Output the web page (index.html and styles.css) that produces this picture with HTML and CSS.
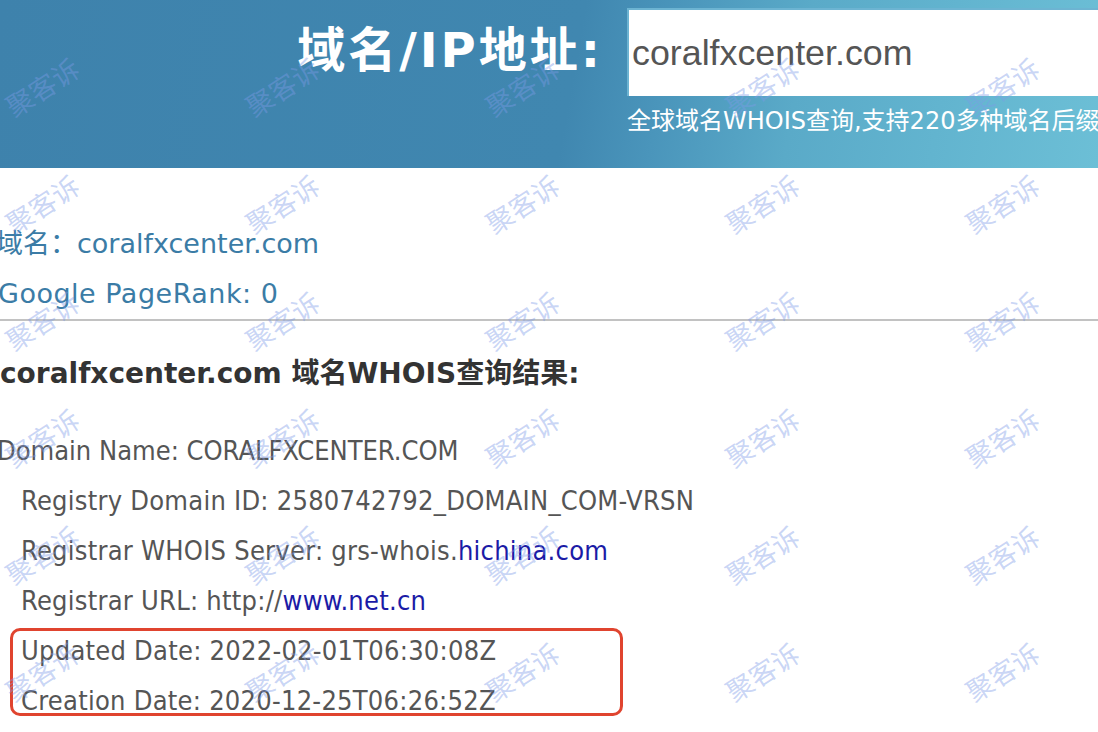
FILE: index.html
```html
<!DOCTYPE html>
<html lang="zh-CN">
<head>
<meta charset="utf-8">
<title>域名WHOIS查询</title>
<link rel="stylesheet" href="styles.css">
</head>
<body>
<header class="top">
  <h1 class="title">域名/IP地址:</h1>
  <div class="search">
    <div class="input">coralfxcenter.com</div>
    <p class="sub">全球域名WHOIS查询,支持220多种域名后缀</p>
  </div>
</header>
<main class="content">
  <p class="info shift">域名：coralfxcenter.com</p>
  <p class="info">Google PageRank: 0</p>
  <hr class="rule">
  <h2 class="heading">coralfxcenter.com 域名WHOIS查询结果:</h2>
  <div class="whois">
    <p class="line first">Domain Name: CORALFXCENTER.COM</p>
    <p class="line">Registry Domain ID: 2580742792_DOMAIN_COM-VRSN</p>
    <p class="line">Registrar WHOIS Server: grs-whois.<a class="link" href="#">hichina.com</a></p>
    <p class="line">Registrar URL: http://<a class="link" href="#">www.net.cn</a></p>
    <div class="mark">
      <p class="line in">Updated Date: 2022-02-01T06:30:08Z</p>
      <p class="line in">Creation Date: 2020-12-25T06:26:52Z</p>
    </div>
  </div>
</main>
<div class="watermarks">
  <span>聚客诉</span><span>聚客诉</span><span>聚客诉</span><span>聚客诉</span><span>聚客诉</span>
  <span>聚客诉</span><span>聚客诉</span><span>聚客诉</span><span>聚客诉</span><span>聚客诉</span>
  <span>聚客诉</span><span>聚客诉</span><span>聚客诉</span><span>聚客诉</span><span>聚客诉</span>
  <span>聚客诉</span><span>聚客诉</span><span>聚客诉</span><span>聚客诉</span><span>聚客诉</span>
  <span>聚客诉</span><span>聚客诉</span><span>聚客诉</span><span>聚客诉</span><span>聚客诉</span>
  <span>聚客诉</span><span>聚客诉</span><span>聚客诉</span><span>聚客诉</span><span>聚客诉</span>
</div>
</body>
</html>
```

FILE: styles.css
```css
html, body {
  margin: 0;
  padding: 0;
}
body {
  width: 1098px;
  height: 732px;
  overflow: hidden;
  position: relative;
  background: #ffffff;
  font-family: "DejaVu Sans", "Noto Sans CJK SC", sans-serif;
}
.top {
  height: 168px;
  display: grid;
  grid-template-columns: 627px 1fr;
  overflow: hidden;
  background: linear-gradient(100deg, #3e82ac 0%, #4087b0 52%, #4a95bb 60%, #5aaac8 72%, #62b4cf 85%, #6cbfd6 100%);
}
.title {
  margin: 20px 0 0 0;
  padding-right: 24px;
  justify-self: end;
  align-self: start;
  height: 60px;
  line-height: 60px;
  color: #ffffff;
  font-family: "DejaVu Sans", "Noto Sans CJK SC", sans-serif;
  font-weight: 700;
  font-size: 48px;
  letter-spacing: 3px;
  white-space: nowrap;
}
.search {
  min-width: 0;
}
.input {
  margin-top: 8px;
  width: 520px;
  height: 88px;
  box-sizing: border-box;
  border-top: 2px solid #6db4d2;
  border-left: 2px solid #6db4d2;
  background: #ffffff;
  padding-left: 3px;
  line-height: 86px;
  font-family: "Liberation Sans", Arial, sans-serif;
  font-size: 35.8px;
  color: #555555;
  white-space: nowrap;
}
.sub {
  margin: 10px 0 0 0;
  line-height: 30px;
  font-size: 24px;
  color: #ffffff;
  white-space: nowrap;
  font-family: "DejaVu Sans", "Noto Sans CJK SC", sans-serif;
}
.content {
  padding-top: 51px;
}
.info {
  margin: 0;
  height: 50px;
  line-height: 50px;
  font-size: 27px;
  color: #3b7ca6;
  white-space: nowrap;
}
.shift {
  text-indent: -4px;
}
.info + .info {
  text-indent: -2px;
  letter-spacing: 0.5px;
}
.rule {
  margin: 0;
  border: 0;
  border-top: 2px solid #c2c2c2;
  height: 0;
}
.heading {
  margin: 28px 0 0 0;
  height: 50px;
  line-height: 50px;
  font-size: 28px;
  font-weight: 700;
  color: #333333;
  white-space: nowrap;
}
.whois {
  margin-top: 27px;
}
.line {
  margin: 0;
  height: 50px;
  line-height: 50px;
  padding-left: 21px;
  font-family: "DejaVu Sans Condensed", "DejaVu Sans", sans-serif;
  font-stretch: condensed;
  font-size: 27px;
  letter-spacing: 0.25px;
  color: #555555;
  white-space: nowrap;
}
.first {
  padding-left: 0;
  text-indent: -3px;
  letter-spacing: 0;
}
.link {
  color: #1b1ba6;
  text-decoration: none;
}
.mark {
  margin: 2px 0 0 10px;
  width: 613px;
  height: 88px;
  box-sizing: border-box;
  border: 3px solid #e0442f;
  border-radius: 10px;
}
.line.in {
  padding-left: 8px;
}
.mark .line:first-child {
  margin-top: -5px;
}
.watermarks {
  position: absolute;
  left: -78px;
  top: 28px;
  display: grid;
  grid-template-columns: repeat(5, 240px);
  grid-auto-rows: 117px;
  pointer-events: none;
}
.watermarks span {
  display: flex;
  align-items: center;
  justify-content: center;
  font-family: "Noto Sans CJK SC", sans-serif;
  font-size: 27px;
  color: rgba(125, 155, 232, 0.42);
  transform: rotate(-33deg);
  white-space: nowrap;
}
```
